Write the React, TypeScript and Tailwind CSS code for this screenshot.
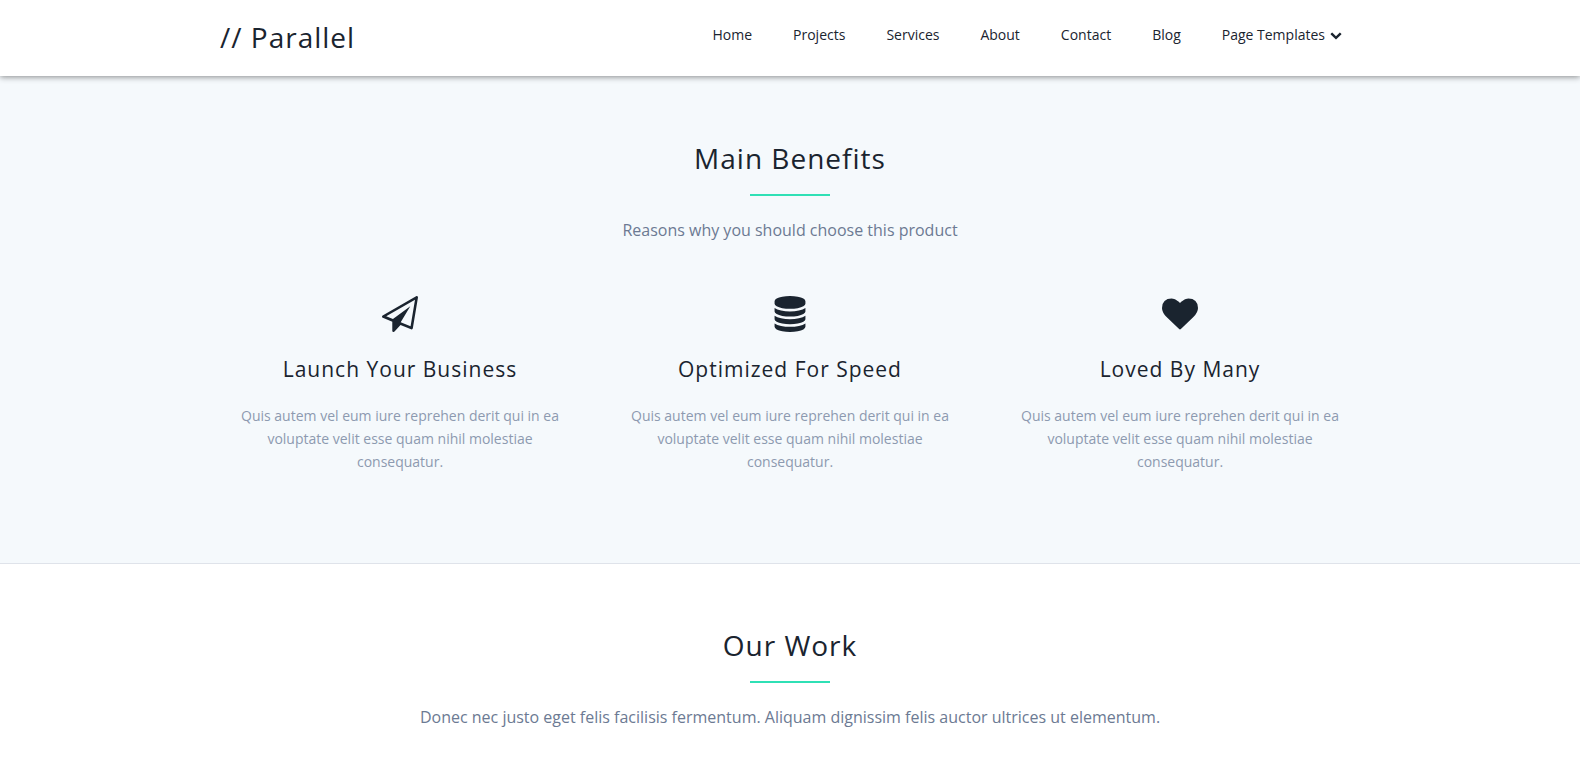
interface Benefit {
  icon: string;
  title: string;
  text: string;
}

// Icon outlines, drawn on a 1792 grid
const icons = {
  plane:
    "M1764 11q33 24 27 64l-256 1536q-5 29-32 45-14 8-31 8-11 0-24-5l-527-215-298 327q-18 21-47 21-14 0-23-4-19-7-30-23.5t-11-36.5v-452l-472-193q-37-14-40-55-3-39 32-59l1664-960q35-21 68 2zm-342 1499l221-1323-1434 827 336 137 863-639-478 797z",
  database:
    "M896 768q237 0 443-43t325-127v170q0 69-103 128t-280 93.5-385 34.5-385-34.5-280-93.5-103-128v-170q119 84 325 127t443 43zm0 768q237 0 443-43t325-127v170q0 69-103 128t-280 93.5-385 34.5-385-34.5-280-93.5-103-128v-170q119 84 325 127t443 43zm0-384q237 0 443-43t325-127v170q0 69-103 128t-280 93.5-385 34.5-385-34.5-280-93.5-103-128v-170q119 84 325 127t443 43zm0-1152q208 0 385 34.5t280 93.5 103 128v128q0 69-103 128t-280 93.5-385 34.5-385-34.5-280-93.5-103-128v-128q0-69 103-128t280-93.5 385-34.5z",
  heart:
    "M896 1664q-26 0-44-18l-624-602q-10-8-27.5-26t-55.5-65.5-68-97.5-53.5-121-23.5-138q0-220 127-344t351-124q62 0 126.5 21.5t120 58 95.5 68.5 76 68q36-36 76-68t95.5-68.5 120-58 126.5-21.5q224 0 351 124t127 344q0 221-229 450l-623 600q-18 18-44 18z",
  chevron:
    "M1683 808l-742 741q-19 19-45 19t-45-19l-742-741q-19-19-19-45.5t19-45.5l166-165q19-19 45-19t45 19l531 531 531-531q19-19 45-19t45 19l166 165q19 19 19 45.5t-19 45.5z",
};

const navLinks = ["Home", "Projects", "Services", "About", "Contact", "Blog"];

const benefitText = "Quis autem vel eum iure reprehen derit qui in ea voluptate velit esse quam nihil molestiae consequatur.";

const benefits: Benefit[] = [
  { icon: icons.plane, title: "Launch Your Business", text: benefitText },
  { icon: icons.database, title: "Optimized For Speed", text: benefitText },
  { icon: icons.heart, title: "Loved By Many", text: benefitText },
];

function Icon({ path, className }: { path: string; className: string }) {
  return (
    <svg viewBox="0 0 1792 1792" fill="currentColor" aria-hidden="true" className={className}>
      <path d={path} />
    </svg>
  );
}

function SectionHeading({ title, subtitle }: { title: string; subtitle: string }) {
  return (
    <div className="text-center">
      <h2 className="text-[28px] leading-9 tracking-[1px]">{title}</h2>
      <div className="mx-auto mt-[18px] h-[2px] w-20 bg-[#2fe0b5]" />
      <p className="mt-5 text-base leading-7 text-[#6c7a93]">{subtitle}</p>
    </div>
  );
}

export default function App() {
  return (
    <div className="min-h-screen bg-white font-['Open_Sans',sans-serif] text-[#1a242f]">
      <header className="relative z-10 bg-white shadow-[0_1px_6px_rgba(0,0,0,0.45)]">
        <div className="mx-auto flex h-[76px] max-w-[1140px] items-center justify-between">
          <a href="#" className="pb-[2px] text-[28px] leading-9 tracking-[1px]">// Parallel</a>
          <nav className="flex items-center gap-[41px] pr-[18px] pb-[6px] text-sm">
            {navLinks.map((link) => (
              <a key={link} href="#">{link}</a>
            ))}
            <a href="#" className="flex items-center gap-[5px]">
              Page Templates <Icon path={icons.chevron} className="size-3" />
            </a>
          </nav>
        </div>
      </header>

      {/* Benefits */}
      <section className="border-b border-[#dfe3ea] bg-[#f5f9fc] pt-16 pb-[90px]">
        <SectionHeading title="Main Benefits" subtitle="Reasons why you should choose this product" />
        <div className="mx-auto mt-[52px] grid max-w-[1170px] grid-cols-3">
          {benefits.map(({ icon, title, text }) => (
            <div key={title} className="px-[25px] text-center">
              <Icon path={icon} className="mx-auto size-9" />
              <h3 className="mt-[23px] text-[21px] leading-7 tracking-[1px]">{title}</h3>
              <p className="mt-[21px] text-sm leading-[23px] text-[#8d9ab0]">{text}</p>
            </div>
          ))}
        </div>
      </section>

      {/* Work */}
      <section className="pt-[63px]">
        <SectionHeading
          title="Our Work"
          subtitle="Donec nec justo eget felis facilisis fermentum. Aliquam dignissim felis auctor ultrices ut elementum."
        />
      </section>
    </div>
  );
}
